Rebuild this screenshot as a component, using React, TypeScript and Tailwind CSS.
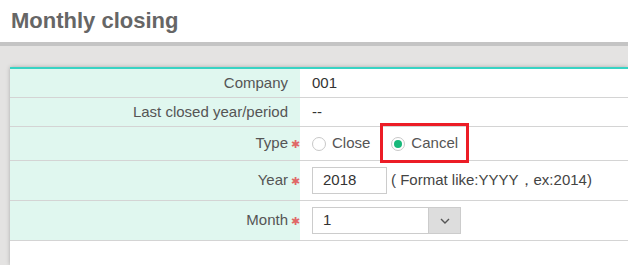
import React from "react";

function Star() {
  return (
    <span className="absolute left-full top-1/2 ml-[3px] -translate-y-1/2 text-[11px] leading-none text-[#e06868]">
      ✱
    </span>
  );
}

function Label({ text, req }: { text: string; req?: boolean }) {
  return (
    <div className="flex items-center justify-end bg-[#e0f7ef] pr-[12px] text-[#555]">
      <span className="relative">
        {text}
        {req && <Star />}
      </span>
    </div>
  );
}

function Radio({ checked, label }: { checked?: boolean; label: string }) {
  return (
    <span className="flex items-center gap-[6px]">
      <span className="flex h-[14px] w-[14px] items-center justify-center rounded-full border border-[#c8c8c8] bg-white">
        {checked && <span className="h-[8px] w-[8px] rounded-full bg-[#17b87a]" />}
      </span>
      <span className="text-[#555]">{label}</span>
    </span>
  );
}

export default function App() {
  return (
    <div className="flex h-[265px] w-[628px] flex-col overflow-hidden bg-white font-['Liberation_Sans',Arial,sans-serif] text-[15px]">
      <div className="flex h-[42px] shrink-0 items-center px-[11px]">
        <h1 className="text-[22px] font-bold leading-none text-[#666]">Monthly closing</h1>
      </div>
      <div className="h-[4px] shrink-0 bg-[#c4c4c4]" />
      <div className="flex-1 bg-[#e4e3e2] pl-[10px] pt-[21px]">
        <div className="h-full border-t-2 border-[#38d3c3] bg-white shadow-[0_0_4px_rgba(0,0,0,0.25)]">
          <div className="grid grid-cols-[290px_1fr]">
            <div className="grid h-[29px] grid-cols-subgrid col-span-2 border-b border-[#d4d4d4]">
              <Label text="Company" />
              <div className="flex items-center pl-[12px] text-[#333]">001</div>
            </div>
            <div className="grid h-[29px] grid-cols-subgrid col-span-2 border-b border-[#d4d4d4]">
              <Label text="Last closed year/period" />
              <div className="flex items-center pl-[12px] text-[#333]">--</div>
            </div>
            <div className="grid h-[34px] grid-cols-subgrid col-span-2 border-b border-[#d4d4d4]">
              <Label text="Type" req />
              <div className="relative flex items-center gap-[21px] pl-[12px]">
                <Radio label="Close" />
                <Radio label="Cancel" checked />
                <div className="absolute left-[80px] top-[-4px] h-[40px] w-[89px] border-[3px] border-[#ec1c26]" />
              </div>
            </div>
            <div className="grid h-[40px] grid-cols-subgrid col-span-2 border-b border-[#d4d4d4]">
              <Label text="Year" req />
              <div className="flex items-center gap-[4px] pl-[12px]">
                <div className="flex h-[27px] w-[75px] items-center border border-[#ccc] pl-[10px] text-[#333]">2018</div>
                <span className="text-[#444]">( Format like:YYYY，ex:2014)</span>
              </div>
            </div>
            <div className="grid h-[40px] grid-cols-subgrid col-span-2 border-b border-[#d4d4d4]">
              <Label text="Month" req />
              <div className="flex items-center pl-[12px]">
                <div className="flex h-[27px] w-[149px] border border-[#ccc]">
                  <div className="flex flex-1 items-center pl-[10px] text-[#333]">1</div>
                  <div className="flex w-[32px] items-center justify-center border-l border-[#ccc] bg-[#dddddd]">
                    <svg width="10" height="6" viewBox="0 0 10 6" fill="none">
                      <path d="M1 1l4 4 4-4" stroke="#555" strokeWidth="1.4" />
                    </svg>
                  </div>
                </div>
              </div>
            </div>
          </div>
        </div>
      </div>
    </div>
  );
}
